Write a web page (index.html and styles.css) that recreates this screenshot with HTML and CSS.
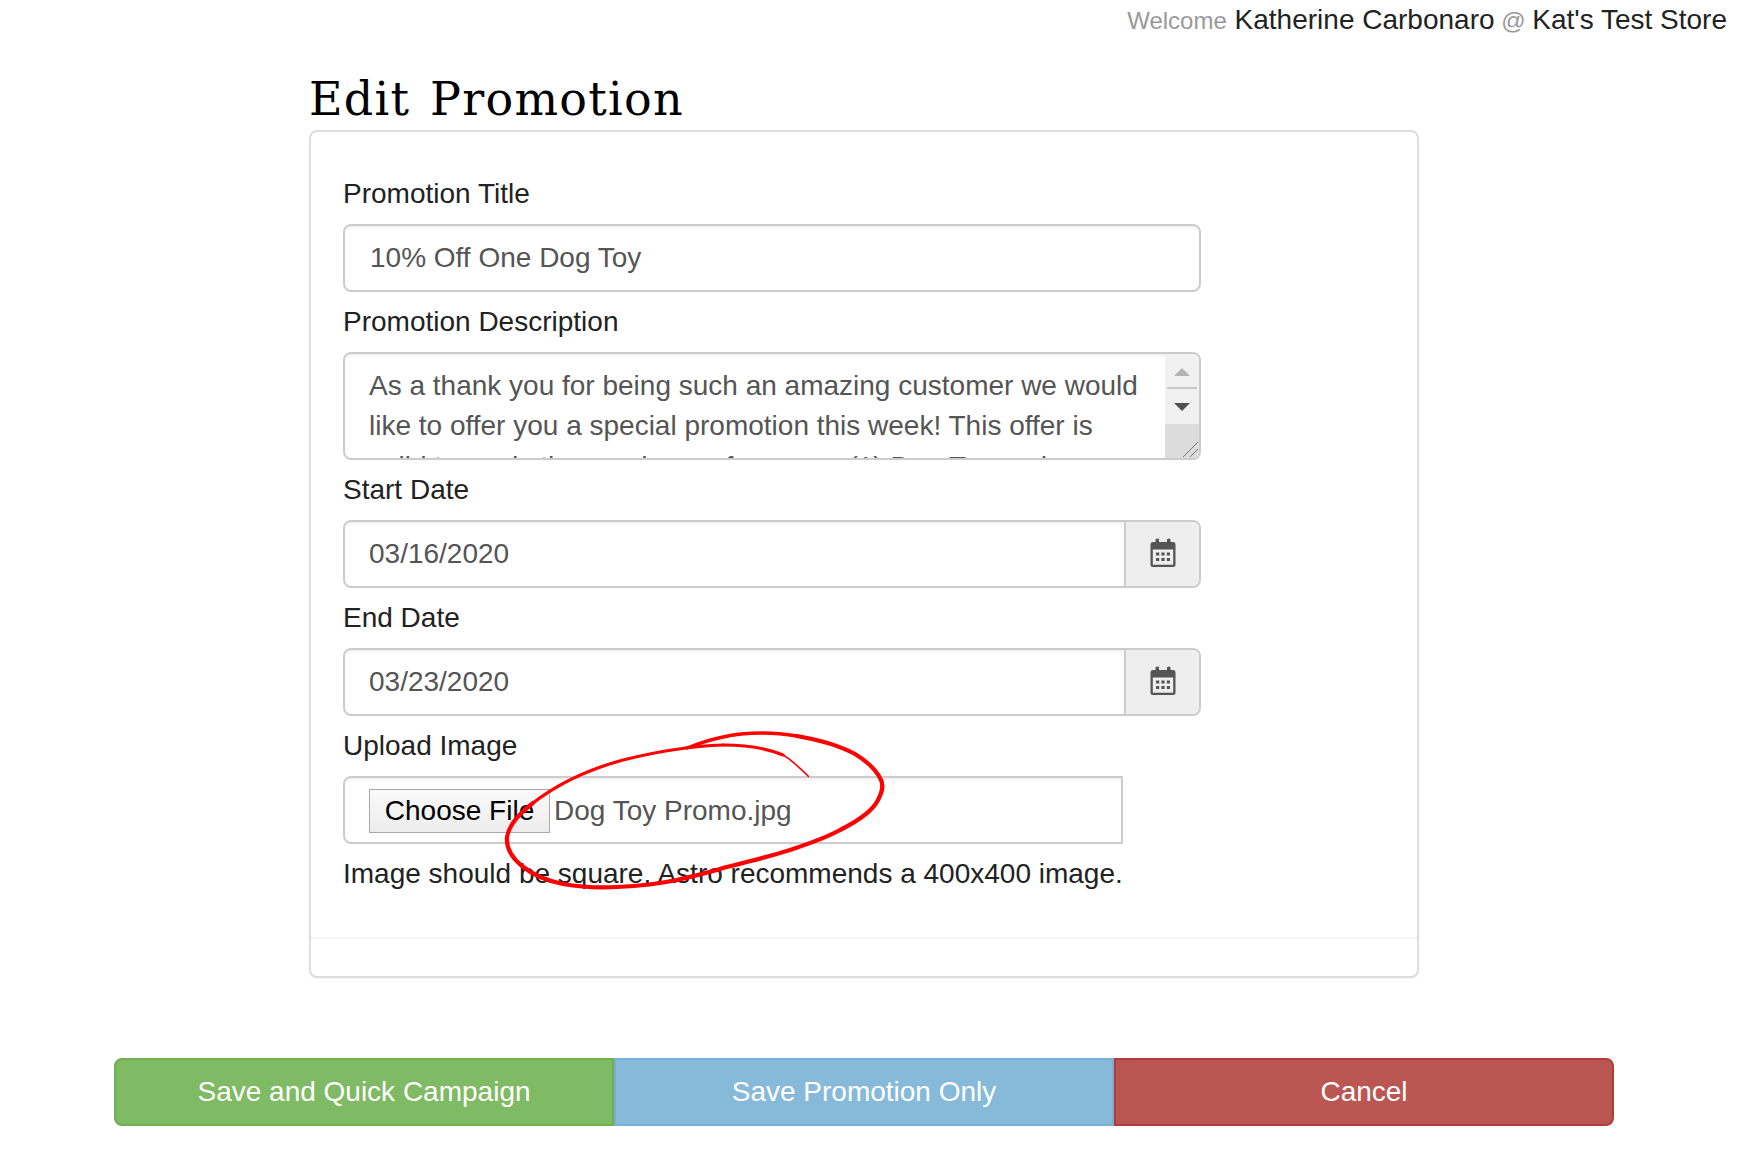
FILE: index.html
```html
<!DOCTYPE html>
<html lang="en">
<head>
<meta charset="utf-8">
<title>Edit Promotion</title>
<link rel="stylesheet" href="styles.css">
</head>
<body>
<header class="topbar">
  <span class="muted">Welcome</span> <span>Katherine Carbonaro</span> <span class="muted at">@</span> <span>Kat's Test Store</span>
</header>
<main class="content">
  <h1 class="page-title">Edit Promotion</h1>
  <section class="panel">
    <form class="panel-body">
      <label class="field-label">Promotion Title</label>
      <div class="control">10% Off One Dog Toy</div>

      <label class="field-label">Promotion Description</label>
      <div class="control textarea">
        <div class="textarea-text">As a thank you for being such an amazing customer we would like to offer you a special promotion this week! This offer is valid towards the purchase of any one (1) Dog Toy and</div>
        <div class="scrollbar">
          <div class="scroll-btn"><span class="arrow-up"></span></div>
          <div class="scroll-btn scroll-btn-down"><span class="arrow-down"></span></div>
          <div class="scroll-track">
            <svg class="grip" width="18" height="18" viewBox="0 0 18 18"><path d="M2 17 17 2M9 17 17 9" stroke="#777" stroke-width="1" fill="none"/></svg>
          </div>
        </div>
      </div>

      <label class="field-label">Start Date</label>
      <div class="control date">
        <div class="date-value">03/16/2020</div>
        <div class="addon">
          <svg class="cal" width="26" height="30" viewBox="0 0 26 30"><path d="M3 4h20a2.500 2.500 0 0 1 2.500 2.500v20a2.500 2.500 0 0 1-2.500 2.500H3a2.500 2.500 0 0 1-2.500-2.500v-20A2.500 2.500 0 0 1 3 4Zm-.2 7.500v15.200h20.400V11.500Z" fill="#555" fill-rule="evenodd"/><rect x="5.500" y="0.500" width="3.500" height="7" rx="1.500" fill="#555"/><rect x="17" y="0.500" width="3.500" height="7" rx="1.500" fill="#555"/><path d="M6 14.500h3.200v3H6zM11.400 14.500h3.200v3h-3.200zM16.800 14.500H20v3h-3.200zM6 20h3.200v3H6zM11.400 20h3.200v3h-3.200zM16.800 20H20v3h-3.200z" fill="#555"/></svg>
        </div>
      </div>

      <label class="field-label">End Date</label>
      <div class="control date">
        <div class="date-value">03/23/2020</div>
        <div class="addon">
          <svg class="cal" width="26" height="30" viewBox="0 0 26 30"><path d="M3 4h20a2.500 2.500 0 0 1 2.500 2.500v20a2.500 2.500 0 0 1-2.500 2.500H3a2.500 2.500 0 0 1-2.500-2.500v-20A2.500 2.500 0 0 1 3 4Zm-.2 7.500v15.200h20.400V11.500Z" fill="#555" fill-rule="evenodd"/><rect x="5.500" y="0.500" width="3.500" height="7" rx="1.500" fill="#555"/><rect x="17" y="0.500" width="3.500" height="7" rx="1.500" fill="#555"/><path d="M6 14.500h3.200v3H6zM11.400 14.500h3.200v3h-3.200zM16.800 14.500H20v3h-3.200zM6 20h3.200v3H6zM11.400 20h3.200v3h-3.200zM16.800 20H20v3h-3.200z" fill="#555"/></svg>
        </div>
      </div>

      <label class="field-label">Upload Image</label>
      <div class="control file">
        <span class="file-btn">Choose File</span>
        <span class="file-name">Dog Toy Promo.jpg</span>
      </div>
      <p class="help">Image should be square. Astro recommends a 400x400 image.</p>
    </form>
    <div class="panel-footer"></div>
  </section>
</main>
<div class="actions">
  <div class="action action-green">Save and Quick Campaign</div>
  <div class="action action-blue">Save Promotion Only</div>
  <div class="action action-red">Cancel</div>
</div>
<svg class="scribble" width="1759" height="1174" viewBox="0 0 1759 1174" fill="none" stroke="#f00" stroke-linecap="round" stroke-linejoin="round">
  <path d="M808.500 776.500C800 768 792 760 783 755" stroke-width="1.600"/>
  <path d="M783 755C764 747 745 745 723 745" stroke-width="3"/>
  <path d="M723 745C690 746 655 752 623 760C590 769 560 782 533 803" stroke-width="3.200"/>
  <path d="M533 803C520 813 509 824 507 837C506 848 512 858 522 866C534 876 548 881 563 884C580 887 598 888 617 887C638 886 658 884 677 880C693 876 708 873 723 868C747 862 768 857 790 850C808 844 826 838 840 830C856 822 872 812 878 800C882 792 884 786 881 780C877 771 868 762 855 754C840 746 820 740 797 736" stroke-width="4.200"/>
  <path d="M797 736C785 734 775 733 763 733C748 733 735 734 723 737C712 739 700 743 687 748" stroke-width="3.400"/>
</svg>
</body>
</html>
```

FILE: styles.css
```css
* { box-sizing: border-box; }

html, body {
  margin: 0;
  height: 1174px;
  overflow: hidden;
  background: #fff;
}

body {
  font-family: "Liberation Sans", Arial, sans-serif;
  font-size: 28px;
  line-height: 39px;
  color: #222;
  position: relative;
}

.topbar {
  height: 40px;
  padding-right: 32px;
  text-align: right;
}

.muted {
  color: #999;
  font-size: 24px;
}

.at {
  margin: 0 -1.100px;
}

.content {
  width: 1110px;
  margin-left: 309px;
}

.page-title {
  margin: 10px 0 0;
  height: 80px;
  font-family: "DejaVu Serif", serif;
  font-size: 46px;
  font-weight: 400;
  letter-spacing: 1.250px;
  word-spacing: 4px;
  line-height: 98px;
  color: #000;
}

.panel {
  height: 848px;
  border: 2px solid #ddd;
  border-radius: 8px;
  box-shadow: 0 1px 2px rgba(0, 0, 0, .05);
}

.panel-body {
  height: 805px;
  padding: 32px 32px 0;
}

.panel-footer {
  height: 39px;
  border-top: 2px solid #f4f4f4;
}

.field-label {
  display: block;
  padding: 10px 0 11px;
}

.control {
  width: 858px;
  height: 68px;
  border: 2px solid #ccc;
  border-radius: 8px;
  padding: 0 25px;
  color: #555;
  line-height: 64px;
  box-shadow: inset 0 2px 2px rgba(0, 0, 0, .06);
  background: #fff;
}

.textarea {
  display: flex;
  height: 108px;
  padding: 0;
  overflow: hidden;
}

.textarea-text {
  flex: 1;
  min-width: 0;
  padding: 12px 24px 0 24px;
  line-height: 40.400px;
  height: 104px;
  overflow: hidden;
}

.scrollbar {
  flex: none;
  width: 34px;
  display: flex;
  flex-direction: column;
  background: #f1f1f1;
}

.scroll-btn {
  height: 35px;
  display: flex;
  align-items: center;
  justify-content: center;
  border-bottom: 2px solid #c9c9c9;
  margin: 0 2px;
  padding-top: 2px;
}

.scroll-btn-down {
  border-bottom: 0;
  height: 35px;
  padding-top: 0;
}

.arrow-up, .arrow-down {
  width: 0;
  height: 0;
  border-left: 8px solid transparent;
  border-right: 8px solid transparent;
}

.arrow-up { border-bottom: 8px solid #b3b3b3; }
.arrow-down { border-top: 8px solid #505050; }

.scroll-track {
  flex: 1;
  background: #dcdcdc;
  position: relative;
}

.grip {
  position: absolute;
  right: 0;
  bottom: 0;
}

.date {
  display: flex;
  padding: 0;
}

.date-value {
  flex: 1;
  padding-left: 24px;
}

.addon {
  flex: none;
  width: 75px;
  background: #eee;
  border-left: 2px solid #ccc;
  border-radius: 0 6px 6px 0;
  display: flex;
  align-items: center;
  justify-content: center;
}

.cal {
  display: block;
  margin-bottom: 2px;
}

.file {
  width: 780px;
  display: flex;
  align-items: center;
  padding: 2px 0 0 24px;
  border-radius: 8px 0 0 8px;
}

.file-btn {
  flex: none;
  width: 181px;
  height: 44px;
  line-height: 41px;
  text-align: center;
  color: #000;
  border: 1.500px solid #a9a9a9;
  background: linear-gradient(#fafafa, #ececec);
}

.file-name { margin-left: 4px; }

.help {
  margin: 10px 0 0;
}

.actions {
  display: flex;
  width: 1500px;
  margin: 80px 0 0 114px;
}

.action {
  flex: 1;
  height: 68px;
  border: 2px solid;
  line-height: 64px;
  text-align: center;
  color: #fff;
}

.action-green {
  background: #7fba64;
  border-color: #70ae52;
  border-radius: 8px 0 0 8px;
}

.action-blue {
  background: #87bad9;
  border-color: #78afd5;
}

.action-red {
  background: #ba5752;
  border-color: #b23d38;
  border-radius: 0 8px 8px 0;
}

.scribble {
  position: absolute;
  left: 0;
  top: 0;
  pointer-events: none;
}
```
